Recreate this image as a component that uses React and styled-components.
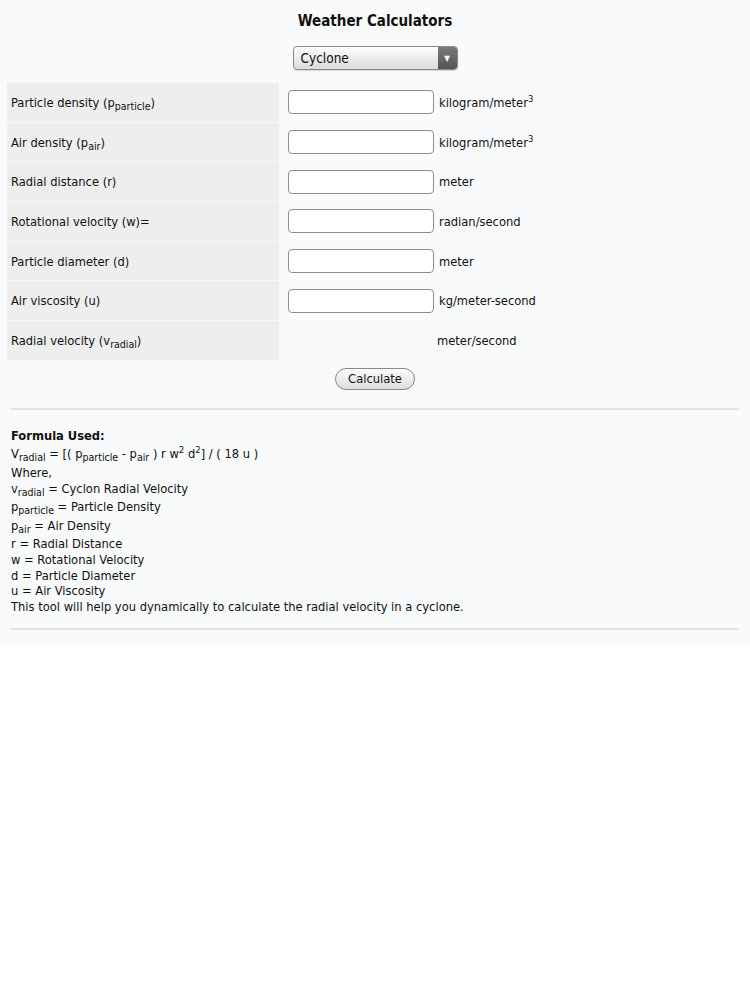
import React from 'react'
import styled, { createGlobalStyle } from 'styled-components'

const GlobalStyle = createGlobalStyle`
  html, body {
    margin: 0;
    padding: 0;
    background: #ffffff;
  }
  body {
    font-family: "DejaVu Sans Condensed", "DejaVu Sans", sans-serif;
    font-size: 12.8px;
    color: #111;
  }
`

const Page = styled.div`
  background: #f8fafc;
  padding: 12px 7px 15px 7px;
`

const Title = styled.h1`
  margin: 0;
  text-align: center;
  font-size: 15px;
  font-weight: bold;
  line-height: 18px;
`

const SelectWrap = styled.div`
  display: flex;
  justify-content: center;
  margin-top: 16px;
  margin-bottom: 13px;
`

const Select = styled.div`
  width: 165px;
  height: 24px;
  box-sizing: border-box;
  border: 1px solid #8a8a8a;
  border-radius: 4px;
  display: flex;
  overflow: hidden;
  background: linear-gradient(#fdfdfd, #dcdcdc);
  box-shadow: 0 1px 1px rgba(0, 0, 0, 0.15);
`

const SelectText = styled.span`
  flex: 1;
  padding-left: 7px;
  line-height: 22px;
  font-size: 13.5px;
`

const SelectArrow = styled.span`
  width: 19px;
  background: linear-gradient(#7a7a7a, #555);
  display: flex;
  align-items: center;
  justify-content: center;
  color: #fff;
  font-size: 8px;
`

const Table = styled.div`
  display: grid;
  grid-template-columns: 272px 1fr;
  row-gap: 1px;
`

const Label = styled.div`
  background: #eeeeee;
  height: 38.7px;
  padding-left: 4px;
  display: flex;
  align-items: center;
`

const Field = styled.div`
  display: flex;
  align-items: center;
  padding-left: ${p => (p.$result ? '158px' : '9px')};
`

const Input = styled.div`
  width: 146px;
  height: 24px;
  box-sizing: border-box;
  border: 1px solid #8e8e8e;
  border-radius: 4px;
  background: #fff;
  margin-right: 5px;
`

const Unit = styled.span``

const ButtonRow = styled.div`
  display: flex;
  justify-content: center;
  margin-top: 8px;
`

const Button = styled.button`
  font-family: inherit;
  font-size: 12.8px;
  color: #111;
  height: 22px;
  padding: 0 12px;
  border: 1px solid #888;
  border-radius: 11px;
  background: linear-gradient(#fcfcfc, #dedede);
`

const Rule = styled.hr`
  border: none;
  border-top: 2px solid #e1e3e5;
  margin: ${p => p.$top || '18px'} 4px 0 4px;
`

const Formula = styled.div`
  padding: 0 4px;
  margin-top: 18px;
  line-height: 15.6px;
  sub {
    font-size: 10.5px;
    vertical-align: -3px;
    line-height: 0;
  }
  sup {
    font-size: 9.5px;
    vertical-align: 5px;
    line-height: 0;
  }
`

const Strong = styled.div`
  font-weight: bold;
  margin-bottom: 3px;
`

const Line = styled.div`
  margin-bottom: ${p => (p.$sub ? '3px' : '0')};
`

const SubLabel = styled.span`
  sub {
    font-size: 10.5px;
    vertical-align: -3px;
    line-height: 0;
  }
  sup {
    font-size: 9.5px;
    vertical-align: 5px;
    line-height: 0;
  }
`

const rows = [
  { label: <>Particle density (p<sub>particle</sub>)</>, unit: <>kilogram/meter<sup>3</sup></> },
  { label: <>Air density (p<sub>air</sub>)</>, unit: <>kilogram/meter<sup>3</sup></> },
  { label: 'Radial distance (r)', unit: 'meter' },
  { label: 'Rotational velocity (w)=', unit: 'radian/second' },
  { label: 'Particle diameter (d)', unit: 'meter' },
  { label: 'Air viscosity (u)', unit: 'kg/meter-second' },
]

export default function App() {
  return (
    <>
      <GlobalStyle />
      <Page>
        <Title>Weather Calculators</Title>
        <SelectWrap>
          <Select>
            <SelectText>Cyclone</SelectText>
            <SelectArrow>▼</SelectArrow>
          </Select>
        </SelectWrap>
        <Table>
          {rows.map((r, i) => (
            <React.Fragment key={i}>
              <Label><SubLabel>{r.label}</SubLabel></Label>
              <Field>
                <Input />
                <Unit><SubLabel>{r.unit}</SubLabel></Unit>
              </Field>
            </React.Fragment>
          ))}
          <Label><SubLabel>Radial velocity (v<sub>radial</sub>)</SubLabel></Label>
          <Field $result>
            <Unit>meter/second</Unit>
          </Field>
        </Table>
        <ButtonRow>
          <Button>Calculate</Button>
        </ButtonRow>
        <Rule />
        <Formula>
          <Strong>Formula Used:</Strong>
          <Line $sub>V<sub>radial</sub> = [( p<sub>particle</sub> - p<sub>air</sub> ) r w<sup>2</sup> d<sup>2</sup>] / ( 18 u )</Line>
          <Line>Where,</Line>
          <Line $sub>v<sub>radial</sub> = Cyclon Radial Velocity</Line>
          <Line $sub>p<sub>particle</sub> = Particle Density</Line>
          <Line $sub>p<sub>air</sub> = Air Density</Line>
          <Line>r = Radial Distance</Line>
          <Line>w = Rotational Velocity</Line>
          <Line>d = Particle Diameter</Line>
          <Line>u = Air Viscosity</Line>
          <Line>This tool will help you dynamically to calculate the radial velocity in a cyclone.</Line>
        </Formula>
        <Rule $top="14px" />
      </Page>
    </>
  )
}
